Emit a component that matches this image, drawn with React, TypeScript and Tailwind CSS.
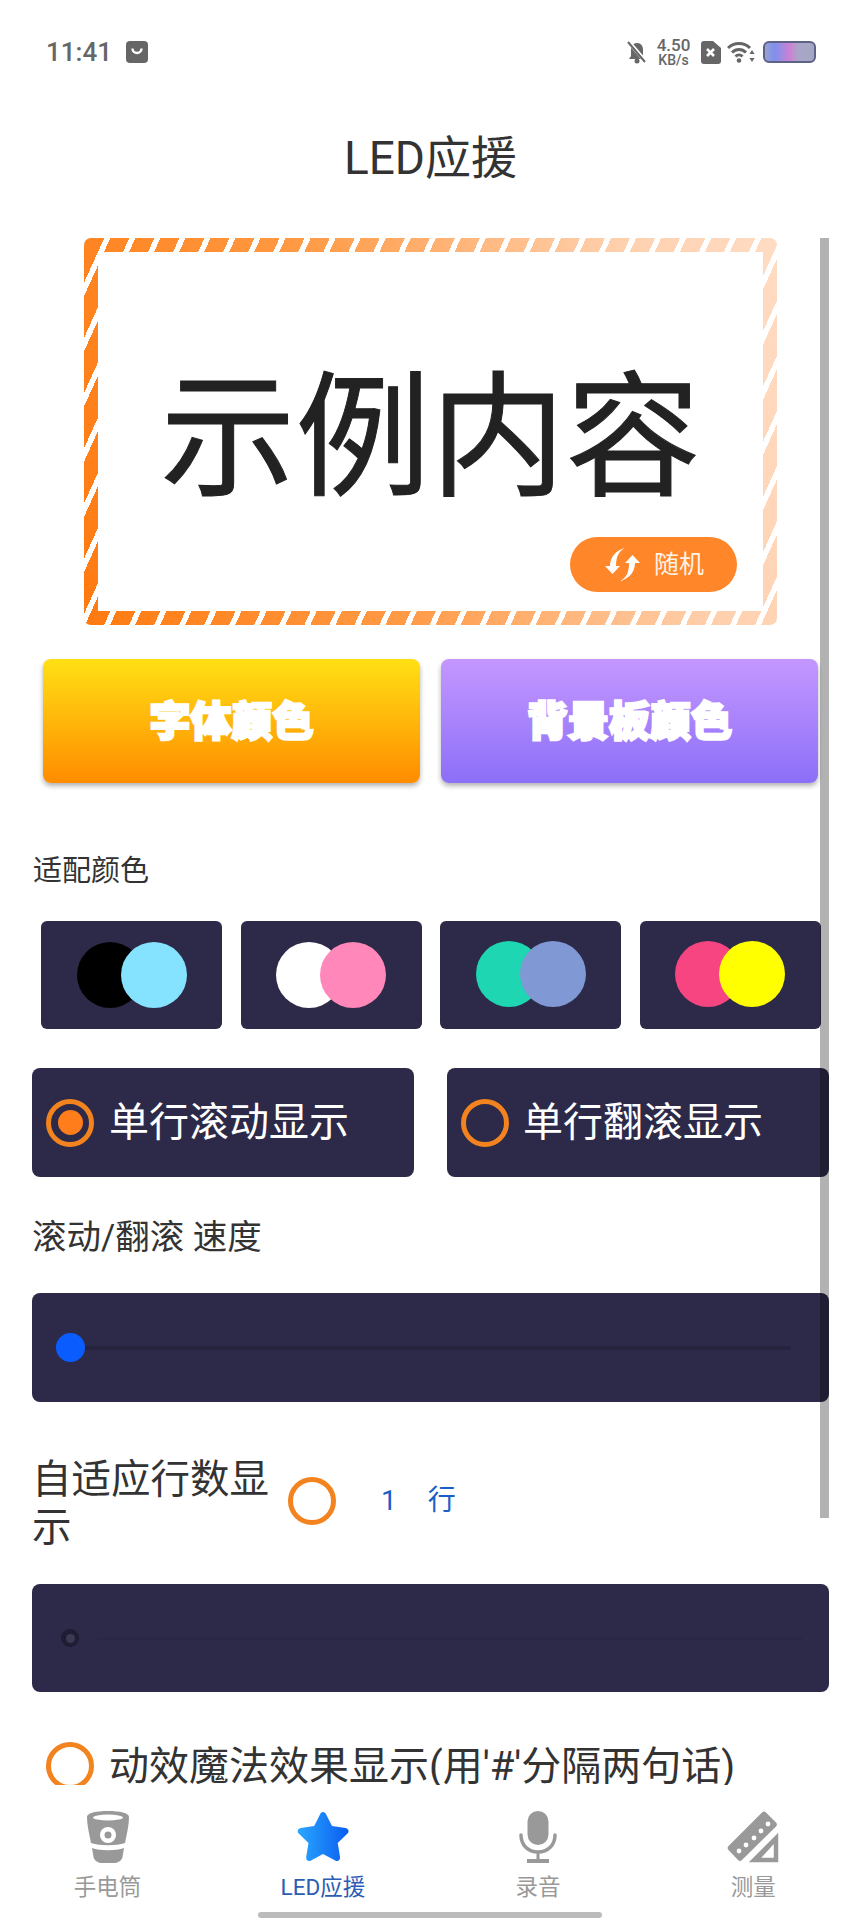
const FONT = "font-['Roboto','Noto_Sans_CJK_SC','Noto_Sans',sans-serif]";

const swatches = [
  { a: "bg-black", b: "bg-[#86e3ff]", lift: false },
  { a: "bg-white", b: "bg-[#ff87b9]", lift: false },
  { a: "bg-[#1ed6b2]", b: "bg-[#8098d4]", lift: true },
  { a: "bg-[#f64580]", b: "bg-[#ffff00]", lift: true },
];

function Radio({ checked = false }: { checked?: boolean }) {
  return (
    <span className="flex h-12 w-12 shrink-0 items-center justify-center rounded-full border-[5px] border-[#f2831f]">
      {checked && <span className="h-[25px] w-[25px] rounded-full bg-[#ff7d1a]" />}
    </span>
  );
}

function StatusBar() {
  return (
    <div className="flex h-[100px] items-start justify-between pl-[46px] pr-[45px] pt-[37px]">
      <div className="flex items-center gap-[14px] pt-[2px]">
        <span className="text-[26px] leading-[26px] font-medium text-[#666]">11:41</span>
        <svg width="22" height="22" viewBox="0 0 22 22">
          <rect width="22" height="22" rx="4" fill="#666" />
          <path d="M6.500 7.500a4.500 4.500 0 0 0 9 0" fill="none" stroke="#fff" strokeWidth="2.400" />
        </svg>
      </div>
      <div className="flex items-center">
        <svg width="22" height="24" viewBox="0 0 22 24">
          <path d="M11 3c4 0 6 3 6 7v6l2 3H3l2-3v-6c0-4 2-7 6-7z" fill="#666" />
          <circle cx="11" cy="21" r="2.500" fill="#666" />
          <path d="M2 1l18 21" stroke="#fff" strokeWidth="4" />
          <path d="M2 2l17 20" stroke="#666" strokeWidth="2" />
        </svg>
        <div className="ml-[7px] flex w-[37px] flex-col items-center text-[#666]">
          <span className="text-[17px] leading-[16px] font-medium">4.50</span>
          <span className="text-[14px] leading-[14px] font-medium">KB/s</span>
        </div>
        <svg className="ml-[8px]" width="21" height="23" viewBox="0 0 21 23">
          <path d="M4 0h9l8 7v13a3 3 0 0 1-3 3H4a3 3 0 0 1-3-3V3a3 3 0 0 1 3-3z" fill="#666" />
          <path d="M7 8l7 7M14 8l-7 7" stroke="#fff" strokeWidth="2.600" />
        </svg>
        <svg className="ml-[6px]" width="28" height="22" viewBox="0 0 28 22">
          <path d="M1 7c6-6 16-6 22 0" fill="none" stroke="#666" strokeWidth="3" />
          <path d="M5 11.500c4-4 10-4 14 0" fill="none" stroke="#666" strokeWidth="3" />
          <path d="M8.500 15.500c2-2 5-2 7 0" fill="none" stroke="#666" strokeWidth="3" />
          <circle cx="12" cy="19.500" r="2.300" fill="#666" />
          <path d="M25 9l2.500 4h-5zM25 21l2.500-4h-5z" fill="#666" />
        </svg>
        <div className="ml-[8px] h-[22px] w-[53px] rounded-[6px] border-2 border-[#5d6386] bg-[linear-gradient(90deg,#9aa3cc_0%,#7f8ff0_18%,#a08be0_35%,#cf7fd6_50%,#a9a6c8_68%,#a3a8c4_100%)]" />
      </div>
    </div>
  );
}

function Preview() {
  return (
    <div className="relative ml-[84px] mt-[56px] h-[387px] w-[693px] rounded-[7px] bg-[repeating-linear-gradient(114.4deg,white_0px,white_1.200px,transparent_1.200px,transparent_18.500px,white_18.500px,white_22.800px),linear-gradient(75deg,#ff7a10_0%,#ff9a45_40%,#ffd0ae_80%,#ffdcc4_100%)] p-[14px]">
      <div className="flex h-full items-center justify-center bg-white pt-[14px]">
        <span className="text-[135px] leading-[160px] text-[#222] [-webkit-text-stroke:1px_#222]">示例内容</span>
      </div>
      <button className="absolute left-[486px] top-[299px] flex h-[55px] w-[167px] items-center justify-center gap-[14px] rounded-full bg-[#ff8629] pl-[2px] text-[25px] text-[#fff3e6]">
        <svg width="35" height="33" viewBox="0 0 35 33" fill="#fff">
          <path d="M20 0C14 3 11 8 11 18h4L7.500 26 0 18h5C5 9 11 2 20 0z" />
          <path d="M15 33c6-3 9-8 9-18h-4l7.500-8L35 15h-5c0 9-6 16-15 18z" />
        </svg>
        随机
      </button>
    </div>
  );
}

function NavItem({ label, active, children }: { label: string; active?: boolean; children: React.ReactNode }) {
  return (
    <div className="flex flex-col items-center">
      <div className="flex h-[52px] items-center justify-center">{children}</div>
      <span className={`mt-[11px] text-[22.500px] leading-[26px] ${active ? "text-[#2b5db5]" : "text-[#999]"}`}>{label}</span>
    </div>
  );
}

export default function App() {
  return (
    <div className={`relative flex h-[1920px] w-[861px] flex-col overflow-hidden bg-white ${FONT}`}>
      <StatusBar />
      <h1 className="mt-[34px] text-center text-[46px] leading-[48px] text-[#333]">LED应援</h1>
      <Preview />

      <div className="ml-[43px] mt-[34px] flex w-[775px] gap-[21px]">
        <button className="flex h-[124px] w-[377px] items-center justify-center rounded-[8px] bg-[linear-gradient(180deg,#ffe014,#ff8c00)] pt-[4px] text-[41px] font-black text-white shadow-[0_3px_5px_rgba(0,0,0,0.3)] [-webkit-text-stroke:2.500px_white]">
          字体颜色
        </button>
        <button className="flex h-[124px] w-[377px] items-center justify-center rounded-[8px] bg-[linear-gradient(180deg,#c497ff,#8c6ff8)] pt-[4px] text-[41px] font-black text-white shadow-[0_3px_5px_rgba(0,0,0,0.3)] [-webkit-text-stroke:2.500px_white]">
          背景板颜色
        </button>
      </div>

      <p className="ml-[33px] mt-[68px] text-[29px] leading-[40px] text-[#333]">适配颜色</p>

      <div className="ml-[41px] mt-[30px] flex w-[780px] justify-between">
        {swatches.map((s, i) => (
          <div key={i} className={`flex h-[108px] w-[181px] items-center justify-center rounded-[6px] bg-[#2c2a48] ${s.lift ? "pb-[3px]" : ""}`}>
            <span className={`h-[66px] w-[66px] rounded-full ${s.a}`} />
            <span className={`-ml-[22px] h-[66px] w-[66px] rounded-full ${s.b}`} />
          </div>
        ))}
      </div>

      <div className="ml-[32px] mt-[39px] flex w-[797px] justify-between">
        <div className="flex h-[109px] w-[382px] items-center rounded-[8px] bg-[#2c2a48] pl-[14px]">
          <Radio checked />
          <span className="ml-[15px] text-[40px] text-white">单行滚动显示</span>
        </div>
        <div className="flex h-[109px] w-[382px] items-center rounded-[8px] bg-[#2c2a48] pl-[14px]">
          <Radio />
          <span className="ml-[14px] text-[40px] text-white">单行翻滚显示</span>
        </div>
      </div>

      <p className="ml-[32px] mt-[35px] text-[34.500px] leading-[50px] text-[#333]">滚动/翻滚 速度</p>

      <div className="ml-[32px] mt-[31px] flex h-[109px] w-[797px] items-center rounded-[8px] bg-[#2c2a48] pl-[24px] pr-[38px]">
        <span className="h-[29px] w-[29px] shrink-0 rounded-full bg-[#0a5cff]" />
        <span className="h-[4px] flex-1 bg-[#25233d]" />
      </div>

      <div className="ml-[32px] mt-[54px] flex items-start">
        <p className="w-[241px] text-[39.500px] leading-[48px] text-[#333]">自适应行数显示</p>
        <div className="ml-[15px] mt-[21px] flex items-center">
          <Radio />
          <span className="ml-[45px] text-[28px] leading-[48px] text-[#1a5fc8]">1</span>
          <span className="ml-[31px] text-[28px] leading-[48px] text-[#1a5fc8]">行</span>
        </div>
      </div>

      <div className="ml-[32px] mt-[32px] flex h-[108px] w-[797px] items-center rounded-[8px] bg-[#2c2a48] pl-[29px] pr-[27px]">
        <span className="flex h-[18px] w-[18px] shrink-0 items-center justify-center rounded-full bg-[#1e1d33]">
          <span className="h-[9px] w-[9px] rounded-full bg-[#3b3a54]" />
        </span>
        <span className="ml-[18px] h-[3px] flex-1 bg-[#292743]" />
      </div>

      <div className="ml-[46px] mt-[50px] flex h-[43px] items-start">
        <Radio />
        <span className="ml-[15px] text-[40px] leading-[50px] whitespace-nowrap text-[#333]">动效魔法效果显示(用'#'分隔两句话)</span>
      </div>

      <nav className="absolute inset-x-0 bottom-0 grid h-[135px] grid-cols-4 bg-white pt-[26px]">
        <NavItem label="手电筒">
          <svg width="44" height="52" viewBox="0 0 44 52" fill="#999">
            <path d="M1 6C1 2 10 0 22 0s21 2 21 6c0 8-2 16-4 26C30 35 14 35 5 32 3 22 1 14 1 6z" />
            <ellipse cx="22" cy="6.500" rx="15" ry="3" fill="#fff" />
            <circle cx="22" cy="24" r="8" fill="#fff" />
            <circle cx="22" cy="24" r="3.500" fill="#999" />
            <path d="M6 37c8 3 24 3 32 0l-1.500 9c-1 4-5 6-9 6h-11c-4 0-8-2-9-6z" />
          </svg>
        </NavItem>
        <NavItem label="LED应援" active>
          <svg width="52" height="52" viewBox="0 0 52 52">
            <defs>
              <linearGradient id="star" x1="0" x2="1" y1="0" y2="0">
                <stop offset="0" stopColor="#2aa8ff" />
                <stop offset="1" stopColor="#0a5cf0" />
              </linearGradient>
            </defs>
            <path
              d="M26 1c1.500 0 2.500 1 3.200 2.500l5.800 11.500 13.500 2c3 .5 4 3.500 2 5.500l-9.800 9.500 2.300 14c.5 3-2 5-4.800 3.500L26 43l-12 6.500c-2.800 1.500-5.300-.5-4.800-3.500l2.300-14-9.800-9.500c-2-2-1-5 2-5.500l13.500-2 5.800-11.500C23.500 2 24.500 1 26 1z"
              fill="url(#star)"
            />
          </svg>
        </NavItem>
        <NavItem label="录音">
          <svg width="38" height="52" viewBox="0 0 38 52" fill="#999">
            <rect x="8.500" y="0" width="21" height="34" rx="10.500" />
            <path d="M2 24c0 10 7 17 17 17s17-7 17-17" fill="none" stroke="#999" strokeWidth="3.500" strokeLinecap="round" />
            <rect x="17.500" y="40" width="3" height="9" />
            <rect x="8" y="48" width="22" height="4" />
          </svg>
        </NavItem>
        <NavItem label="测量">
          <svg width="52" height="52" viewBox="0 0 52 52" fill="#999">
            <path d="M35 1.500a3 3 0 0 1 4 0l10 10a3 3 0 0 1 0 4L15 49a3 3 0 0 1-4 0L1.500 39a3 3 0 0 1 0-4z" />
            <circle cx="12" cy="40" r="2.400" fill="#fff" />
            <circle cx="19" cy="34" r="2.400" fill="#fff" />
            <circle cx="27" cy="27" r="2.400" fill="#fff" />
            <circle cx="34" cy="20" r="2.400" fill="#fff" />
            <circle cx="41" cy="13" r="2.400" fill="#fff" />
            <path d="M52 20v32H20zM46 35L36 46h10z" fillRule="evenodd" stroke="#fff" strokeWidth="1.500" />
          </svg>
        </NavItem>
      </nav>

      <div className="absolute bottom-[2px] left-[258px] h-[6px] w-[344px] rounded-full bg-[#bbb]" />
      <div className="absolute left-[820px] top-[238px] h-[1280px] w-[9px] bg-black/30" />
    </div>
  );
}
